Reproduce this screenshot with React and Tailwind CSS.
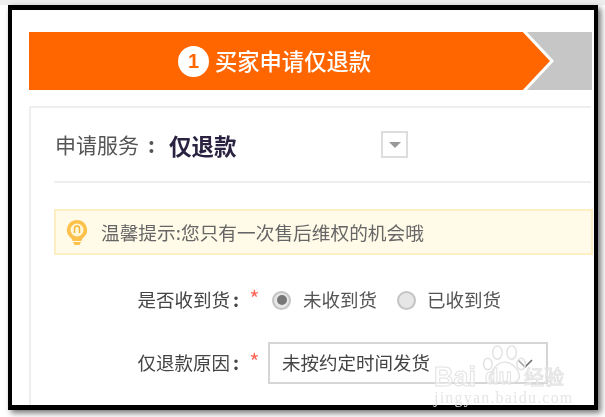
function Radio({ checked }) {
  return (
    <span className="flex h-[19px] w-[19px] flex-none items-center justify-center rounded-full border-2 border-[#c4c4c4] bg-[#e6e6e6]">
      {checked && <span className="h-[10px] w-[10px] rounded-full bg-[#777]" />}
    </span>
  );
}

function FormLabel({ children }) {
  return (
    <div className="flex w-[227px] flex-none items-center justify-end text-[#444]">
      <span>{children}</span>
      <span className="ml-[3px] font-bold">:</span>
      <span className="ml-[10px] w-[11px] text-center text-[22px] leading-[24px] text-[#ff6a5a] -translate-y-[3px]">*</span>
    </div>
  );
}

function Watermark() {
  return (
    <div className="pointer-events-none absolute left-[434px] top-[344px] z-10 h-[64px] w-[140px] blur-[0.4px]">
      <svg className="absolute left-[46px] top-0" width="50" height="40" viewBox="0 0 52 42" fill="#fff" fillOpacity="0.4" stroke="#e2e2e2" strokeWidth="1.500">
        <ellipse cx="18" cy="9" rx="5" ry="7" />
        <ellipse cx="33" cy="9" rx="5" ry="7" />
        <ellipse cx="8" cy="21" rx="4.500" ry="6" />
        <ellipse cx="43" cy="21" rx="4.500" ry="6" />
        <path d="M26 19c7 0 15 8 15 15 0 5-5 7-9 6-4-1-8-1-12 0-4 1-9-1-9-6 0-7 8-15 15-15z" />
      </svg>
      <div className="absolute left-0 top-[21px] flex h-[24px] items-center text-[27px] font-bold leading-[24px] text-white/50 [-webkit-text-stroke:1px_#e2e2e2] font-['Liberation_Sans',sans-serif]">
        <span>Bai</span>
        <span className="ml-[9px] text-[22px]">du</span>
        <span className="ml-[12px] text-[20px] font-normal font-['Noto_Sans_CJK_SC',sans-serif]">经验</span>
      </div>
      <div className="absolute left-0 top-[46px] whitespace-nowrap text-[16px] leading-[16px] tracking-[1.200px] text-[#e6e6e6] font-['Liberation_Serif',serif]">
        jingyan.baidu.com
      </div>
    </div>
  );
}

export default function App() {
  return (
    <div className="relative h-[417px] w-[605px] overflow-hidden bg-white font-['Noto_Sans_CJK_SC','Liberation_Sans',sans-serif]">
      <div className="h-[5px] bg-[#eeeeee]" />
      <div className="ml-[8px] h-[405px] w-[590px] border-[4px] border-t-[5px] border-b-[5px] border-black shadow-[3px_3px_6px_rgba(0,0,0,0.55)]">
        <div className="h-full overflow-hidden bg-white pl-[17px] pt-[22px] blur-[0.5px]">
          {/* step bar */}
          <div className="flex h-[58px] w-[563px]">
            <div className="flex w-[494px] flex-none items-center justify-center bg-[#ff6600] pr-[3px]">
              <span className="flex h-[31px] w-[31px] items-center justify-center rounded-full bg-white text-[20px] font-bold text-[#ff6600] font-['Liberation_Sans',sans-serif]">
                1
              </span>
              <span className="ml-[6px] text-[22.300px] font-medium text-white">买家申请仅退款</span>
            </div>
            <svg className="flex-none" width="69" height="58" viewBox="0 0 69 58">
              <rect width="69" height="58" fill="#c6c6c6" />
              <path d="M0 0 L29 29 L0 58z" fill="#ff6600" />
              <path d="M0 -2 L29 29 L0 60" fill="#ff6600" stroke="#fff" strokeWidth="3" />
            </svg>
          </div>

          {/* form card */}
          <div className="mt-[16px] h-[320px] w-[562px] border-l-2 border-t-2 border-[#eeeeee] pl-[23px]">
            <div className="flex h-[75px] items-center border-b-2 border-[#eeeeee]">
              <span className="ml-[1px] flex w-[114px] flex-none items-center text-[21px] text-[#555]">
                申请服务<span className="ml-[9px] font-bold">:</span>
              </span>
              <span className="w-[212px] flex-none translate-y-[1px] text-[22.500px] font-bold text-[#2a2240]">仅退款</span>
              <span className="flex h-[27px] w-[27px] flex-none items-center justify-center border-2 border-[#dddddd]">
                <span className="h-0 w-0 border-x-[6px] border-t-[6px] border-x-transparent border-t-[#999]" />
              </span>
            </div>

            <div className="mt-[26px] flex h-[46px] w-[539px] items-center border-2 border-[#fdeec4] bg-[#fffbe8] pl-[10px]">
              <svg width="22" height="27" viewBox="0 0 22 27" className="flex-none">
                <path d="M11 1a10 10 0 0 0-6 18c1 1 1.500 2 1.500 3h9c0-1 .5-2 1.500-3a10 10 0 0 0-6-18z" fill="#fcc14a" />
                <circle cx="11" cy="11" r="6.500" fill="#fff7d8" />
                <path d="M8.500 14v-4.500a2.500 2.500 0 0 1 5 0V14" fill="none" stroke="#f5b63a" strokeWidth="1.500" />
                <path d="M7 23h8l-1.500 3h-5z" fill="#fcc14a" />
              </svg>
              <span className="ml-[13px] whitespace-nowrap text-[18.700px] text-[#666]">温馨提示:您只有一次售后维权的机会哦</span>
            </div>

            <div className="mt-[31px] flex h-[28px] items-center text-[18.500px] text-[#444]">
              <div className="-ml-[21px]"><FormLabel>是否收到货</FormLabel></div>
              <div className="ml-[12px]"><Radio checked /></div>
              <span className="ml-[12px] w-[94px] flex-none text-[#555]">未收到货</span>
              <Radio />
              <span className="ml-[11px] text-[#555]">已收到货</span>
            </div>

            <div className="mt-[28px] flex h-[42px] items-center text-[18.500px]">
              <div className="-ml-[21px]"><FormLabel>仅退款原因</FormLabel></div>
              <div className="ml-[8px] flex h-[42px] w-[280px] flex-none items-center justify-between border-2 border-[#d6d6d6] pl-[12px] pr-[13px] text-[#444]">
                <span>未按约定时间发货</span>
                <svg width="16" height="9" viewBox="0 0 16 9" fill="none" stroke="#666" strokeWidth="1.500">
                  <path d="M1 1l7 7 7-7" />
                </svg>
              </div>
            </div>
          </div>
        </div>
      </div>
      <Watermark />
    </div>
  );
}
